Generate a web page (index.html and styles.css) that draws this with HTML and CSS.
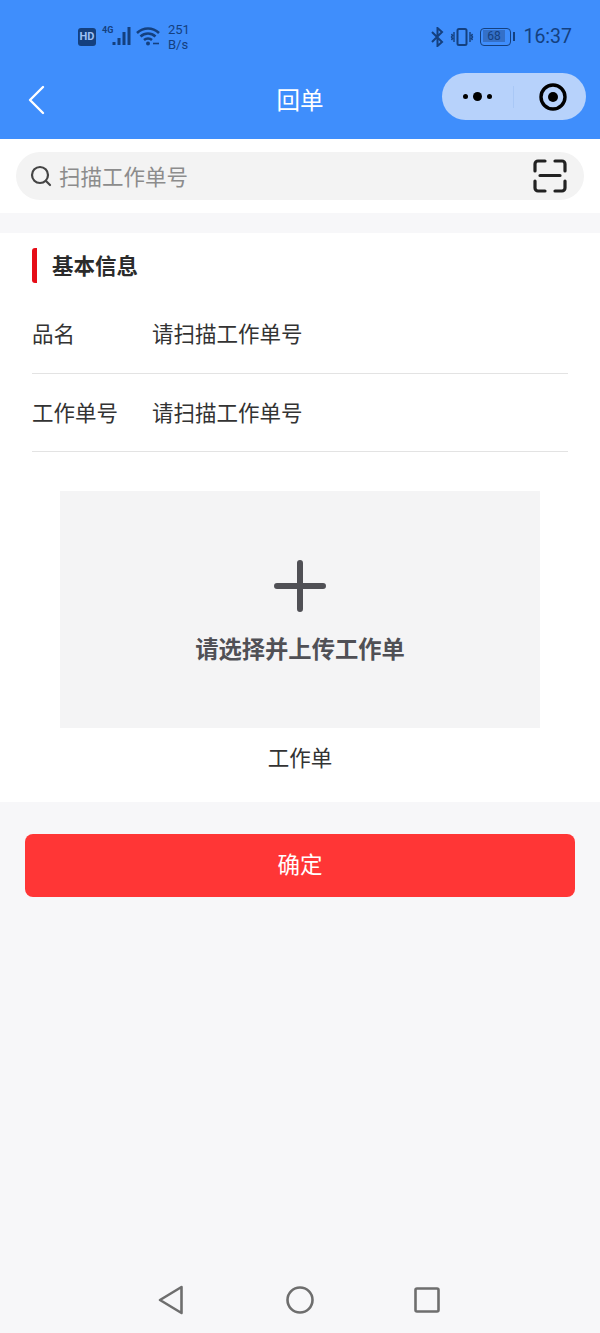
FILE: index.html
```html
<!DOCTYPE html>
<html>
<head>
<meta charset="utf-8">
<title>回单</title>
<link rel="stylesheet" href="styles.css">
</head>
<body>
<div class="page">
  <header class="top">
    <div class="status">
      <div class="status-left">
        <span class="hd">HD</span>
        <span class="net">4G</span>
        <svg class="bars" width="20" height="20" viewBox="0 0 20 20"><path d="M2 19v-3M7 19v-7M12 19V6M17 19V1" stroke="#14407f" stroke-width="3" fill="none"/></svg>
        <svg class="wifi" width="24" height="20" viewBox="0 0 24 20" fill="none" stroke="#14407f" stroke-width="2.600"><path d="M1 7c6.500-6 15.500-6 22 0M4.500 10.500c4.500-4 10.500-4 15 0M8 14c2.200-1.800 5.800-1.800 8 0"/><circle cx="12" cy="17.500" r="2" fill="#14407f" stroke="none"/><path d="M17 17.500h6" stroke-width="1.600"/></svg>
        <span class="speed">251<br>B/s</span>
      </div>
      <div class="status-right">
        <svg width="15" height="20" viewBox="0 0 15 20" fill="none" stroke="#14407f" stroke-width="2"><path d="M2 5l10 10-4.500 4V1L12 5 2 15"/></svg>
        <svg width="24" height="20" viewBox="0 0 24 20" fill="none" stroke="#14407f" stroke-width="2"><rect x="7.500" y="2" width="9" height="16" rx="1.500"/><path d="M4 5v10M1.500 7l1 1.500-1 1.500 1 1.500-1 1.500M20 5v10M22.500 7l-1 1.500 1 1.500-1 1.500 1 1.500" stroke-width="1.400"/></svg>
        <div class="battery"><span class="battery-level">68</span></div>
        <span class="clock">16:37</span>
      </div>
    </div>
    <nav class="nav">
      <svg class="back" width="18" height="30" viewBox="0 0 18 30" fill="none" stroke="#fff" stroke-width="2.400" stroke-linecap="round" stroke-linejoin="round"><path d="M16 2L3 15l13 13"/></svg>
      <h1 class="nav-title">回单</h1>
      <div class="capsule">
        <div class="capsule-side">
          <i class="dot"></i><i class="dot dot-big"></i><i class="dot"></i>
        </div>
        <div class="capsule-side capsule-right">
          <svg width="28" height="28" viewBox="0 0 28 28"><circle cx="14" cy="14" r="12" fill="none" stroke="#000" stroke-width="3.400"/><circle cx="14" cy="14" r="5" fill="#000"/></svg>
        </div>
      </div>
    </nav>
  </header>

  <section class="search-wrap">
    <div class="search">
      <svg width="22" height="22" viewBox="0 0 22 22" fill="none" stroke="#444" stroke-width="2.200" stroke-linecap="round"><circle cx="10" cy="10" r="8"/><path d="M16 16l4 4"/></svg>
      <span class="search-text">扫描工作单号</span>
      <svg class="scan" width="34" height="34" viewBox="0 0 34 34" fill="none" stroke="#222" stroke-width="3.200" stroke-linecap="round" stroke-linejoin="round"><path d="M2 12V5a3 3 0 0 1 3-3h7M22 2h7a3 3 0 0 1 3 3v7M2 22v7a3 3 0 0 0 3 3h7M22 32h7a3 3 0 0 0 3-3v-7M7 16.500h20"/></svg>
    </div>
  </section>

  <section class="panel">
    <div class="panel-head"><span class="panel-title">基本信息</span></div>
    <div class="row"><span class="row-label">品名</span><span>请扫描工作单号</span></div>
    <div class="row"><span class="row-label">工作单号</span><span>请扫描工作单号</span></div>
    <div class="upload">
      <svg width="52" height="52" viewBox="0 0 52 52" fill="none" stroke="#505055" stroke-width="6" stroke-linecap="round"><path d="M26 3v46M3 26h46"/></svg>
      <div class="upload-text">请选择并上传工作单</div>
    </div>
    <div class="upload-name">工作单</div>
  </section>

  <button class="confirm">确定</button>

  <footer class="softkeys">
    <svg width="26" height="30" viewBox="0 0 26 30" fill="none" stroke="#6e6e6e" stroke-width="2.600" stroke-linejoin="round"><path d="M23.500 2L2 15l21.500 13z"/></svg>
    <svg width="28" height="28" viewBox="0 0 28 28" fill="none" stroke="#6e6e6e" stroke-width="2.600"><circle cx="14" cy="14" r="12.500"/></svg>
    <svg width="26" height="26" viewBox="0 0 26 26" fill="none" stroke="#6e6e6e" stroke-width="2.600" stroke-linejoin="round"><rect x="1.500" y="1.500" width="23" height="23" rx="1.500"/></svg>
  </footer>
</div>
</body>
</html>
```

FILE: styles.css
```css
* {
  box-sizing: border-box;
}
html, body {
  margin: 0;
  padding: 0;
}
body {
  font-family: "Noto Sans CJK SC", "Noto Sans", sans-serif;
  color: #333;
  background-color: #f7f7f9;
}
.page {
  width: 600px;
  height: 1333px;
  display: flex;
  flex-direction: column;
  overflow: hidden;
}

/* blue header */
.top {
  height: 139px;
  background-color: #3f8efc;
}
.status {
  height: 73px;
  display: flex;
  justify-content: space-between;
  align-items: center;
  padding: 0 28px 0 78px;
  color: #14407f;
}
.status-left, .status-right {
  display: flex;
  align-items: center;
}
.hd {
  width: 18px;
  height: 18px;
  border-radius: 3px;
  background-color: #14407f;
  color: #9cc0f5;
  font: bold 11px/18px "Roboto", sans-serif;
  text-align: center;
}
.net {
  width: 10px;
  margin: -13px 0 0 6px;
  font: bold 9px/10px "Roboto", sans-serif;
}
.bars {
  margin-top: -1px;
}
.wifi {
  margin-left: 4px;
  margin-top: -1px;
}
.speed {
  margin-left: 8px;
  font: 13px/15px "Roboto", sans-serif;
}
.status-right {
  gap: 5px;
}
.battery {
  position: relative;
  width: 31px;
  height: 18px;
  margin-left: 1px;
  border: 1.500px solid #14407f;
  border-radius: 4px;
  padding: 1.500px;
}
.battery::after {
  content: "";
  position: absolute;
  right: -5px;
  top: 3px;
  width: 2px;
  height: 9px;
  background-color: #14407f;
}
.battery-level {
  display: block;
  width: 22px;
  height: 12px;
  background-color: #3470c8;
  font: 12px/12px "Roboto", sans-serif;
  text-align: center;
}
.clock {
  margin-left: 7px;
  font: 19.500px/24px "Roboto", sans-serif;
}
.nav {
  position: relative;
  height: 66px;
  display: flex;
  align-items: center;
  justify-content: space-between;
  padding: 0 14px 19px 27px;
}
.back {
  display: block;
  margin-top: 7px;
}
.nav-title {
  position: absolute;
  left: 0;
  right: 0;
  top: 8px;
  margin: 0;
  color: #fff;
  font-size: 23.500px;
  line-height: 36px;
  font-weight: normal;
  text-align: center;
}
.capsule {
  width: 144px;
  height: 47px;
  border-radius: 24px;
  background-color: #b7d2fb;
  display: flex;
  align-items: center;
}
.capsule-side {
  width: 72px;
  height: 22px;
  display: flex;
  align-items: center;
  justify-content: center;
  gap: 5px;
  border-right: 1px solid #a9c8f6;
}
.capsule-right {
  flex: 1;
  border-right: none;
  padding-left: 6px;
}
.dot {
  width: 5px;
  height: 5px;
  border-radius: 50%;
  background-color: #000;
}
.dot-big {
  width: 9px;
  height: 9px;
}

/* search */
.search-wrap {
  height: 74px;
  padding: 13px 16px;
  background-color: #fff;
}
.search {
  height: 48px;
  border-radius: 24px;
  background-color: #f3f3f3;
  display: flex;
  align-items: center;
  padding: 0 17px 0 14px;
}
.search-text {
  margin-left: 7px;
  flex: 1;
  color: #8c8c8c;
  font-size: 21.500px;
  line-height: 48px;
}

/* info panel */
.panel {
  margin-top: 20px;
  height: 569px;
  background-color: #fff;
  padding: 15px 32px 0;
}
.panel-head {
  height: 35px;
  border-left: 5px solid #e60d17;
  border-radius: 3px;
  padding-left: 15px;
}
.panel-title {
  font-size: 21.500px;
  line-height: 33px;
  font-weight: bold;
  color: #2b2b2b;
}
.row {
  height: 78px;
  display: flex;
  align-items: center;
  border-bottom: 1px solid #e3e3e3;
  padding-bottom: 2px;
  font-size: 21.500px;
  color: #333;
}
.row:nth-child(2) {
  height: 91px;
  padding-top: 14px;
  padding-bottom: 5px;
}
.row-label {
  width: 120px;
}
.upload {
  width: 480px;
  height: 237px;
  margin: 39px 0 0 28px;
  background-color: #f4f4f5;
  display: flex;
  flex-direction: column;
  align-items: center;
  padding-top: 69px;
}
.upload-text {
  margin-top: 19px;
  font-size: 23.300px;
  line-height: 34px;
  font-weight: bold;
  color: #505055;
}
.upload-name {
  margin-top: 13px;
  text-align: center;
  font-size: 21.500px;
  line-height: 32px;
}

/* button + softkeys */
.confirm {
  display: block;
  width: 550px;
  height: 63px;
  margin: 32px 0 0 25px;
  padding: 0 0 5px;
  border: none;
  border-radius: 8px;
  background-color: #ff3636;
  color: #fff;
  font-family: inherit;
  font-size: 22.500px;
}
.softkeys {
  margin-top: 388px;
  display: flex;
  align-items: center;
  padding-left: 158px;
  gap: 102px;
}
.softkeys svg:last-child {
  margin-left: -2px;
}
```
